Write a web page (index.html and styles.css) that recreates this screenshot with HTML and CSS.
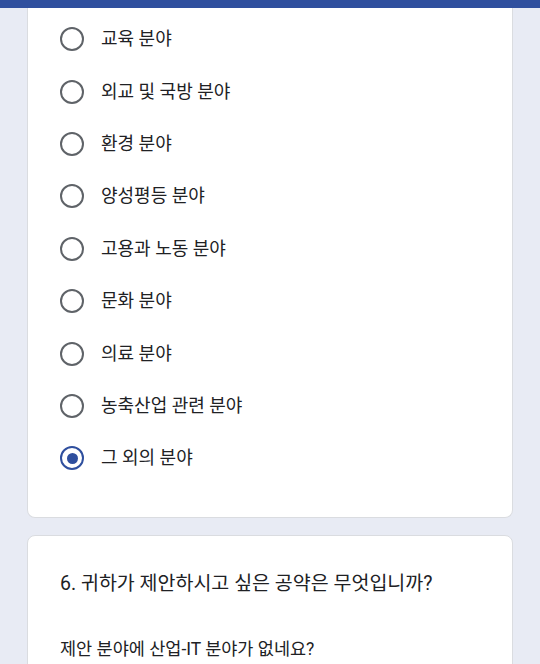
FILE: index.html
```html
<!DOCTYPE html>
<html lang="ko">
<head>
<meta charset="utf-8">
<link rel="stylesheet" href="styles.css">
</head>
<body>
<div class="topbar"></div>
<main class="page">
  <section class="card card-cut">
    <ul class="options">
      <li class="option"><span class="radio"></span><span class="label">교육 분야</span></li>
      <li class="option"><span class="radio"></span><span class="label">외교 및 국방 분야</span></li>
      <li class="option"><span class="radio"></span><span class="label">환경 분야</span></li>
      <li class="option"><span class="radio"></span><span class="label">양성평등 분야</span></li>
      <li class="option"><span class="radio"></span><span class="label">고용과 노동 분야</span></li>
      <li class="option"><span class="radio"></span><span class="label">문화 분야</span></li>
      <li class="option"><span class="radio"></span><span class="label">의료 분야</span></li>
      <li class="option"><span class="radio"></span><span class="label">농축산업 관련 분야</span></li>
      <li class="option"><span class="radio checked"></span><span class="label">그 외의 분야</span></li>
    </ul>
  </section>
  <section class="card">
    <h2 class="question">6. 귀하가 제안하시고 싶은 공약은 무엇입니까?</h2>
    <p class="answer">제안 분야에 산업-IT 분야가 없네요?</p>
  </section>
</main>
</body>
</html>
```
FILE: styles.css
```css
* { box-sizing: border-box; }
html, body {
  margin: 0;
  padding: 0;
  background: #e8ebf4;
  font-family: Roboto, "Noto Sans CJK KR", sans-serif;
  color: #202124;
  overflow: hidden;
}
.topbar {
  height: 8px;
  background: #2f4f9e;
}
.page {
  width: 486px;
  margin: 0 0 0 27px;
  display: flex;
  flex-direction: column;
  gap: 17px;
}
.card {
  background: #fff;
  border: 1px solid #dadce0;
  border-radius: 8px;
  padding: 0 32px;
}
.card-cut {
  border-top: none;
  border-top-left-radius: 0;
  border-top-right-radius: 0;
  padding-top: 5px;
  padding-bottom: 32px;
}
.options {
  list-style: none;
  margin: 0;
  padding: 0;
}
.option {
  height: 52.4px;
  display: flex;
  align-items: center;
  gap: 17px;
}
.radio {
  width: 24px;
  height: 24px;
  border: 2px solid #5f6368;
  border-radius: 50%;
  flex: none;
  display: flex;
  align-items: center;
  justify-content: center;
}
.radio.checked {
  border-color: #2f4f9e;
}
.radio.checked::after {
  content: "";
  width: 11px;
  height: 11px;
  border-radius: 50%;
  background: #2f4f9e;
}
.label {
  font-size: 18px;
  line-height: 22px;
}
.question {
  margin: 35px 0 0;
  font-size: 19.5px;
  font-weight: 400;
  line-height: 26px;
}
.answer {
  margin: 41px 0 40px;
  font-size: 17.5px;
  line-height: 22px;
}
```
